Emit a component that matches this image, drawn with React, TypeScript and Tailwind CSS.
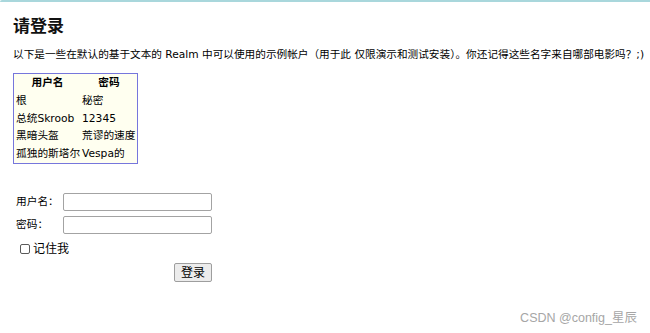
import React from "react";

const body = { fontFamily: '"DejaVu Sans","Noto Sans CJK SC",sans-serif' };

export default function App() {
  const rows: [string, string][] = [
    ["根", "秘密"],
    ["总统Skroob", "12345"],
    ["黑暗头盔", "荒谬的速度"],
    ["孤独的斯塔尔", "Vespa的"],
  ];
  return (
    <div className="relative w-[650px] h-[333px] overflow-hidden bg-white text-black" style={body}>
      <div className="h-[2px] border-t-[2px] border-l-[1px] border-[#a9d7dc] rounded-tl-[10px]" />
      <div className="pl-[13px]">
        <h1 className="mt-[14px] h-[20px] leading-[20px] text-[17px] font-bold text-[#111]">请登录</h1>
        <p className="mt-[12px] h-[14px] leading-[14px] text-[10.65px] whitespace-nowrap">
          以下是一些在默认的基于文本的 Realm 中可以使用的示例帐户（用于此 仅限演示和测试安装）。你还记得这些名字来自哪部电影吗？;)
        </p>
        <div className="mt-[11px] w-[125px] p-[1px] bg-[#7676dc]">
          <div className="bg-[#fffff0] text-[10.7px]">
            <div className="grid grid-cols-[67px_56px] h-[18px] items-center font-bold">
              <div className="text-center">用户名</div>
              <div className="text-center">密码</div>
            </div>
            {rows.map(([u, p]) => (
              <div key={u} className="grid grid-cols-[67px_56px] h-[17.8px] items-center whitespace-nowrap">
                <div className="pl-[2px]">{u}</div>
                <div className="pl-[1px]">{p}</div>
              </div>
            ))}
          </div>
        </div>
        <div className="mt-[29px] pl-[3px] w-[199px] text-[10.7px]">
          <div className="flex items-center h-[18px]">
            <span className="w-[47px]">用户名：</span>
            <div className="w-[149px] h-[18px] border border-[#a3a3a3] rounded-[2px] bg-white" />
          </div>
          <div className="flex items-center h-[18px] mt-[5px]">
            <span className="w-[47px]">密码：</span>
            <div className="w-[149px] h-[18px] border border-[#a3a3a3] rounded-[2px] bg-white" />
          </div>
          <div className="flex items-center h-[16px] mt-[7px] pl-[4px]">
            <span className="w-[10px] h-[10px] border border-[#5a5a5a] rounded-[2px] bg-white" />
            <span className="ml-[3px] text-[12px] leading-[16px]">记住我</span>
          </div>
          <div className="flex justify-end mt-[6px]">
            <div className="w-[38px] h-[19px] border border-[#9e9e9e] rounded-[2px] bg-[#ececec] flex items-center justify-center text-[12px]">
              登录
            </div>
          </div>
        </div>
      </div>
      <div
        className="absolute right-[13px] top-[310px] text-[12.5px] leading-[16px] text-[#a6a6a6]"
        style={{ fontFamily: '"Liberation Sans","Noto Sans CJK SC",sans-serif' }}
      >
        CSDN @config_星辰
      </div>
    </div>
  );
}
